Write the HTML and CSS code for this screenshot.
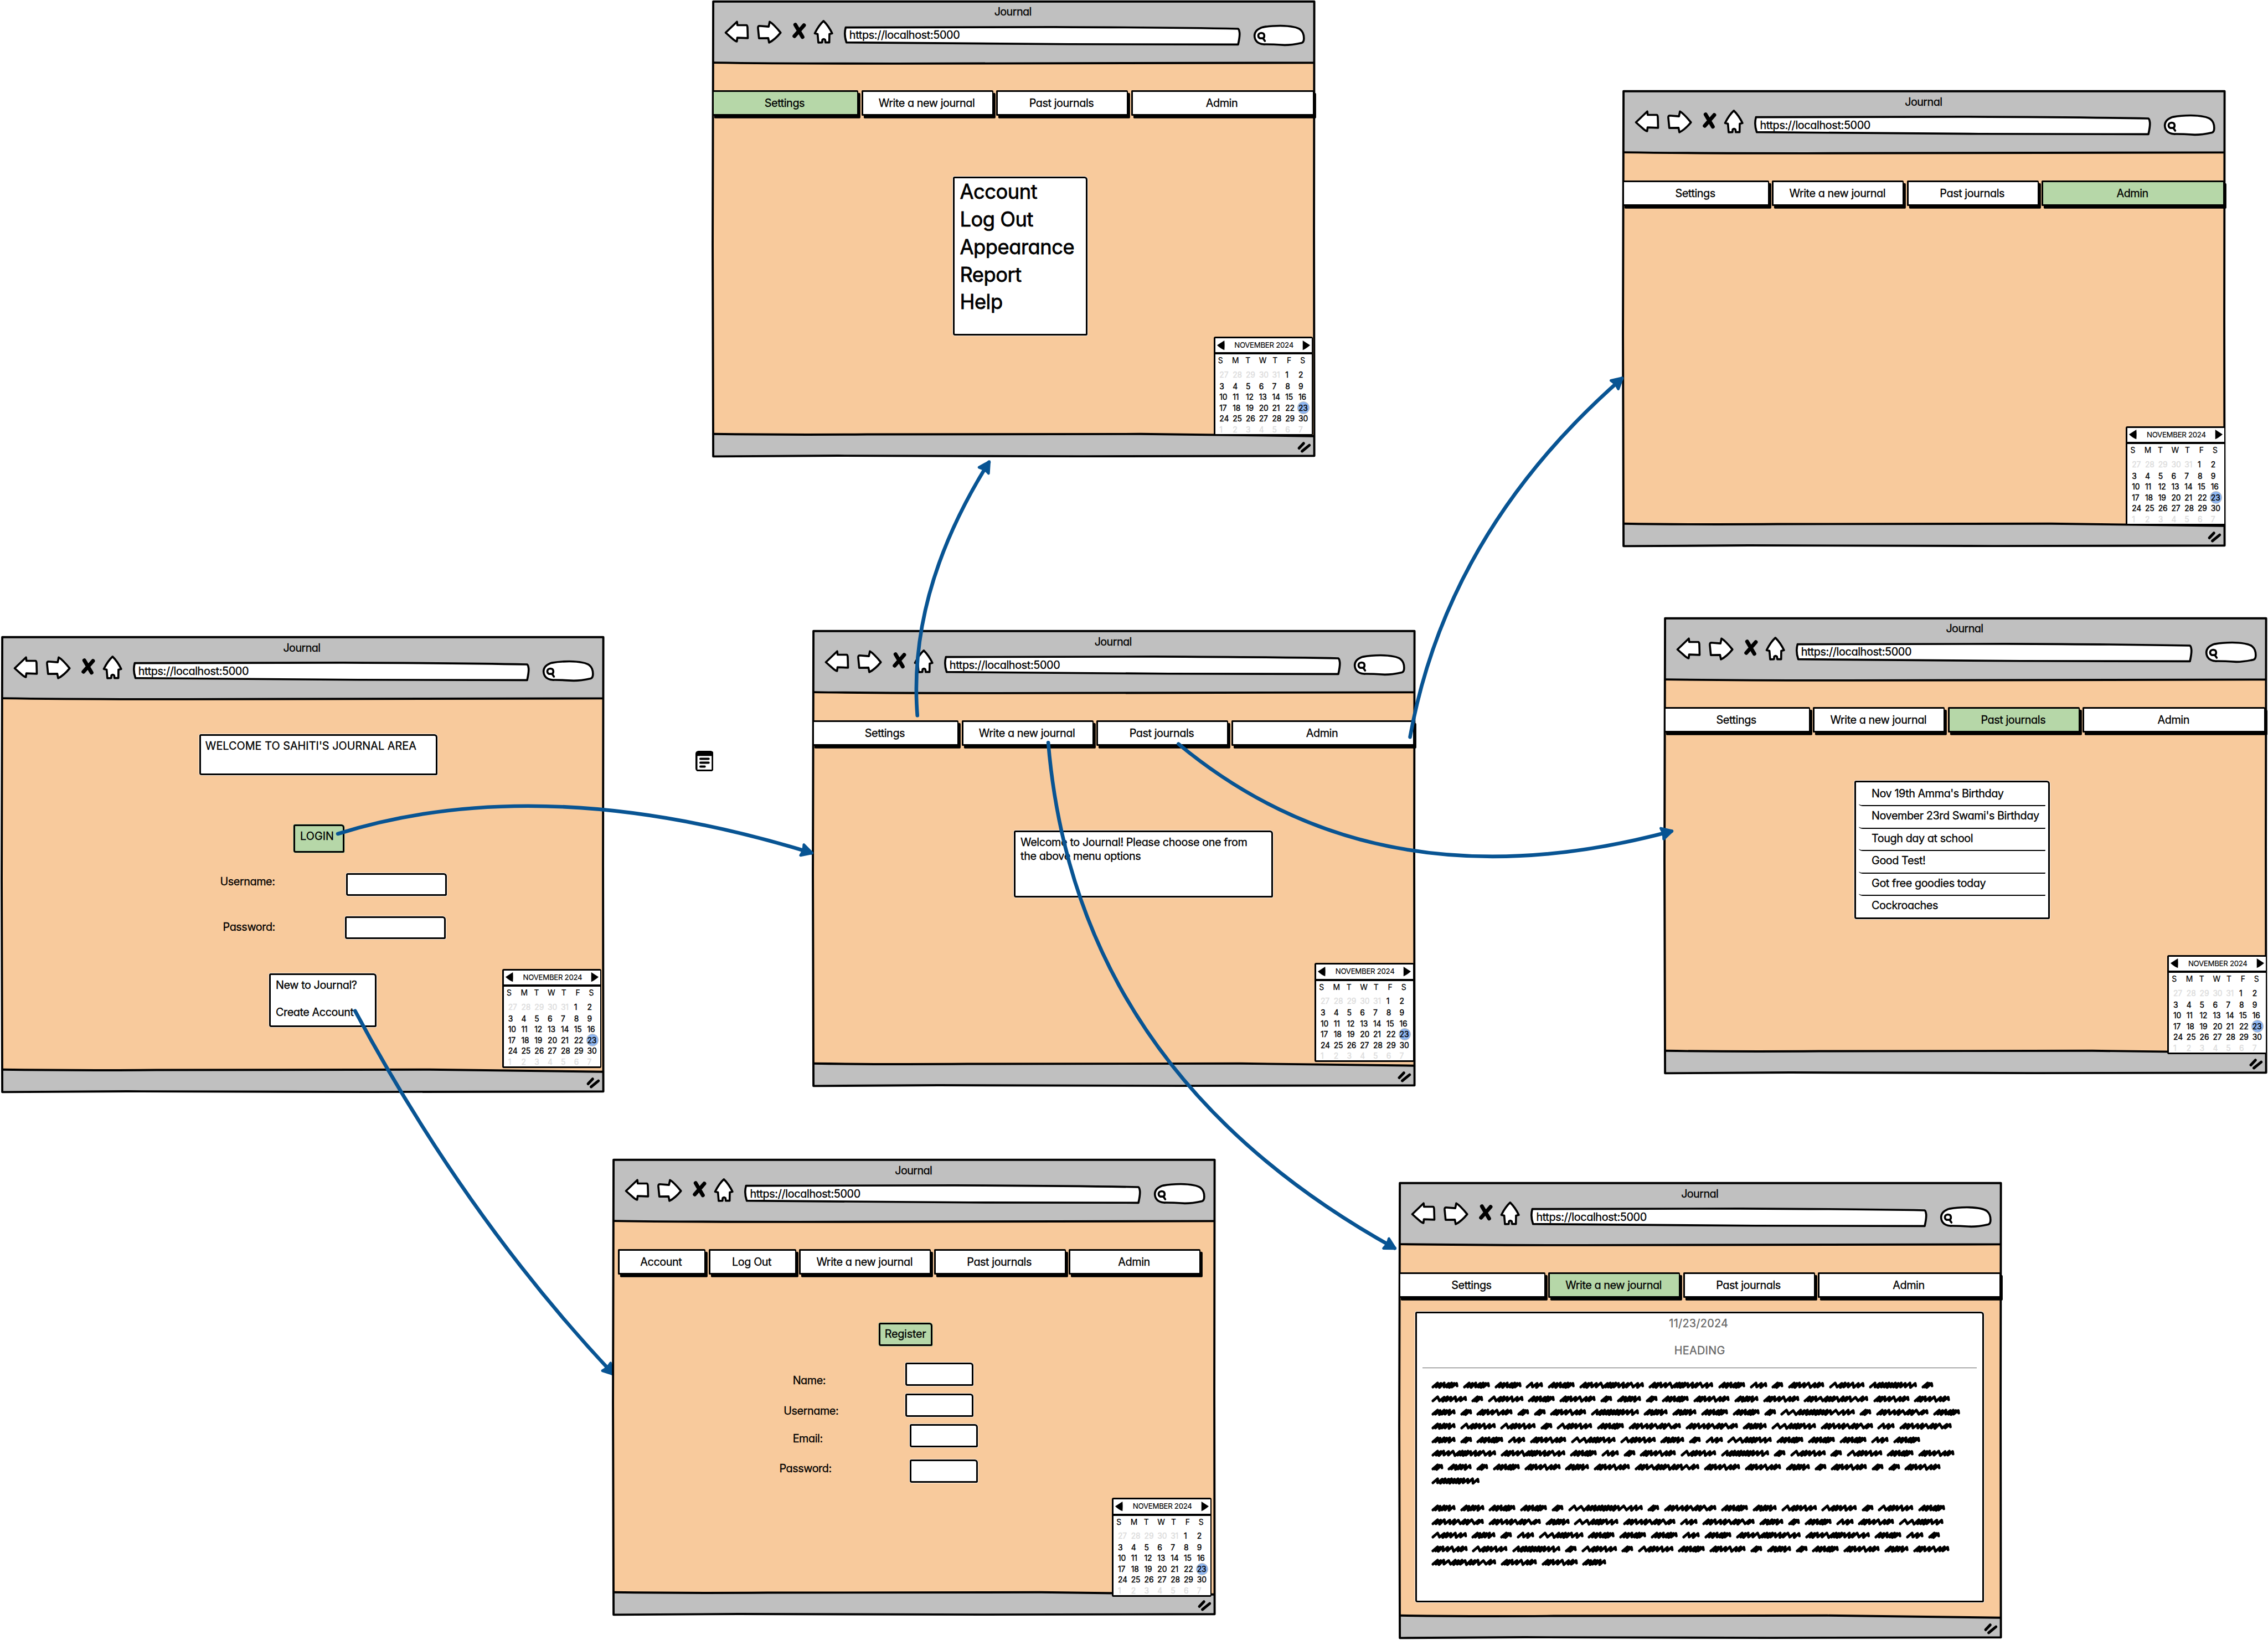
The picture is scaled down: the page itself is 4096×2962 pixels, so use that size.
FILE: index.html
```html
<!DOCTYPE html>
<html lang="en">
<head>
<meta charset="utf-8">
<title>Journal wireframes</title>
<link rel="stylesheet" href="styles.css">
</head>
<body>
<svg class="defs" aria-hidden="true">
  <symbol id="frame" viewBox="24 3 4191 3171" overflow="visible">
    <path fill="#f8ca9c" d="M30 10H4206V3168H30Z"/>
    <path fill="#c0c0c0" d="M30 10H4206V436L1500 441L30 434ZM30 3013H2800L4206 3027V3168H30Z"/>
    <g fill="none" stroke="#000" stroke-width="15" stroke-linejoin="round">
      <path d="M32 10H4206L4204 1600L4206 3165L2600 3168L900 3164L32 3169L28 1700Z"/>
      <path d="M32 434Q500 441 1300 441Q3000 439 4206 435M32 3013Q500 3020 1100 3016Q2400 3010 3000 3013L4206 3028"/>
    </g>
    <g fill="#fff" stroke="#000" stroke-width="14" stroke-linejoin="round" stroke-linecap="round">
      <path d="M118 226L197 150L200 174L262 174Q269 174 270 190L272 264L199 261L196 287Q185 286 160 263Z"/>
      <path d="M352 179L417 184L424 150Q450 165 500 226Q460 275 420 295L414 264L350 265L343 195Q342 180 352 179Z"/>
      <path d="M798 145Q832 178 858 231L839 236L838 294L812 294L809 275Q799 266 790 275L788 294L762 295L757 236L737 231Q765 175 798 145Z"/>
      <path d="M952 190L2400 187Q3200 190 3676 199Q3684 202 3687 225Q3690 250 3677 308L2500 306L957 294Q938 240 952 190Z"/>
      <path d="M3855 307Q3793 300 3791 248Q3792 205 3850 188Q3900 178 3970 178Q4080 180 4110 205Q4134 225 4134 265Q4134 292 4118 297Q4050 312 4000 312Q3900 306 3855 307Z"/>
      <path fill="none" d="M3828 265L3849 265Q3859 262 3859 246Q3857 228 3838 228Q3818 230 3817 247Q3818 261 3828 265M3850 265L3863 284"/>
    </g>
    <g fill="none" stroke="#000" stroke-linecap="round">
      <path stroke-width="27" d="M602 171L652 256M662 175L596 250"/>
      <path stroke-width="19" d="M4100 3112L4132 3078M4121 3133L4172 3091"/>
    </g>
  </symbol>
  <symbol id="prev" viewBox="0 0 18 23"><path d="M0 11L17 0Q18 11 17 22Q8 19 0 11Z"/></symbol>
  <symbol id="next" viewBox="0 0 18 23"><path d="M1 0L18 11Q9 19 1 22Z"/></symbol>
</svg>

<main class="board">
  <section class="window w-login">
    <svg class="frame"><use href="#frame"/></svg>
    <header class="bar"><h2>Journal</h2><p class="url">https://localhost:5000</p></header>
    <div class="box welcome caps">WELCOME TO SAHITI'S JOURNAL AREA</div>
    <div class="box button login caps">LOGIN</div>
    <div class="field l-user"><label>Username:</label><span class="box input"></span></div>
    <div class="field l-pass"><label>Password:</label><span class="box input"></span></div>
    <div class="box signup"><p>New to Journal?</p><p>Create Account</p></div>
    <div class="calendar"></div>
  </section>

  <section class="window w-settings">
    <svg class="frame"><use href="#frame"/></svg>
    <header class="bar"><h2>Journal</h2><p class="url">https://localhost:5000</p></header>
    <nav class="tabs"><a class="on">Settings</a><a>Write a new journal</a><a>Past journals</a><a>Admin</a></nav>
    <ul class="box menu"><li>Account</li><li>Log Out</li><li>Appearance</li><li>Report</li><li>Help</li></ul>
    <div class="calendar"></div>
  </section>

  <section class="window w-admin">
    <svg class="frame"><use href="#frame"/></svg>
    <header class="bar"><h2>Journal</h2><p class="url">https://localhost:5000</p></header>
    <nav class="tabs"><a>Settings</a><a>Write a new journal</a><a>Past journals</a><a class="on">Admin</a></nav>
    <div class="calendar"></div>
  </section>

  <section class="window w-home">
    <svg class="frame"><use href="#frame"/></svg>
    <header class="bar"><h2>Journal</h2><p class="url">https://localhost:5000</p></header>
    <nav class="tabs"><a>Settings</a><a>Write a new journal</a><a>Past journals</a><a>Admin</a></nav>
    <div class="box message">Welcome to Journal! Please choose one from<br>the above menu options</div>
    <div class="calendar"></div>
  </section>

  <section class="window w-past">
    <svg class="frame"><use href="#frame"/></svg>
    <header class="bar"><h2>Journal</h2><p class="url">https://localhost:5000</p></header>
    <nav class="tabs"><a>Settings</a><a>Write a new journal</a><a class="on">Past journals</a><a>Admin</a></nav>
    <ul class="box entries"><li>Nov 19th Amma's Birthday</li><li>November 23rd Swami's Birthday</li><li>Tough day at school</li><li>Good Test!</li><li>Got free goodies today</li><li>Cockroaches</li></ul>
    <div class="calendar"></div>
  </section>

  <section class="window w-write">
    <svg class="frame"><use href="#frame"/></svg>
    <header class="bar"><h2>Journal</h2><p class="url">https://localhost:5000</p></header>
    <nav class="tabs"><a>Settings</a><a class="on">Write a new journal</a><a>Past journals</a><a>Admin</a></nav>
    <article class="box paper">
      <p class="date">11/23/2024</p>
      <p class="heading">HEADING</p>
      <div class="scribble"></div>
    </article>
  </section>

  <svg class="note" viewBox="0 0 42 48"><rect width="42" height="48" rx="7"/><path fill="#fff" d="M4.500 12H37.500V43.500H4.500Z"/><path stroke="#000" stroke-width="5" stroke-linecap="round" d="M11.500 18.500H30.500M11.500 27.500H30.500M11.500 36.500H21.500"/></svg>

  <svg class="links" viewBox="0 0 5250 3796">
    <marker id="tip" markerUnits="userSpaceOnUse" markerWidth="50" markerHeight="50" viewBox="-25 -25 50 50" refX="6" refY="0" orient="auto"><path d="M8 0L-16 -13Q-12 0 -16 13Z" fill="#085493" stroke="#085493" stroke-width="6" stroke-linejoin="round"/></marker>
    <g fill="none" stroke="#085493" stroke-width="8.500" stroke-linecap="round">
      <path marker-end="url(#tip)" d="M782 1930Q1255 1782 1878 1974"/>
      <path marker-end="url(#tip)" d="M2123.500 1656Q2101 1370 2289 1070"/>
      <path marker-end="url(#tip)" d="M2426.500 1719Q2490 2480 3228 2889"/>
      <path marker-end="url(#tip)" d="M2728 1722Q3190 2106 3869 1924"/>
      <path marker-end="url(#tip)" d="M3264 1706Q3350 1230 3754 876"/>
      <path marker-end="url(#tip)" d="M822 2340Q1080 2820 1419 3180"/>
    </g>
  </svg>

  <section class="window w-register">
    <svg class="frame"><use href="#frame"/></svg>
    <header class="bar"><h2>Journal</h2><p class="url">https://localhost:5000</p></header>
    <nav class="tabs five"><a>Account</a><a>Log Out</a><a>Write a new journal</a><a>Past journals</a><a>Admin</a></nav>
    <div class="box button register">Register</div>
    <div class="field r-name"><label>Name:</label><span class="box input"></span></div>
    <div class="field r-user"><label>Username:</label><span class="box input"></span></div>
    <div class="field r-mail"><label>Email:</label><span class="box input"></span></div>
    <div class="field r-pass"><label>Password:</label><span class="box input"></span></div>
    <div class="calendar"></div>
  </section>
</main>
<script src="board.js"></script>
</body>
</html>
```
FILE: styles.css
```css
/* 1rem is ten board units; the board is 5250 units wide */
html { font-size: 7.802px; }
* { box-sizing: border-box; margin: 0; padding: 0; }
body {
  background: #fff;
  color: #000;
  font-family: Inter, "Noto Sans", sans-serif;
  font-feature-settings: "cv11", "calt" 0;
}
ul { list-style: none; }
.defs { position: absolute; width: 0; height: 0; }

.board {
  position: relative;
  width: 4096px;
  height: 2962px;
  overflow: hidden;
  font-size: 2.54rem;
  line-height: 3.2rem;
  letter-spacing: -.022em;
  -webkit-text-stroke: .04rem #000;
  white-space: nowrap;
}
.caps { letter-spacing: .002em; }

/* windows on the canvas */
.window { position: absolute; isolation: isolate; width: 139.7rem; height: 105.7rem; }
.w-login { left: .2rem; top: 147.3rem; --cal-x: 116.05rem; --cal-y: 76.95rem; }
.w-settings { left: 164.8rem; top: .1rem; --cal-x: 116.1rem; --cal-y: 77.8rem; }
.w-admin { left: 375.6rem; top: 20.95rem; --cal-x: 116.5rem; --cal-y: 77.7rem; }
.w-home { left: 188rem; top: 145.9rem; --cal-x: 116.3rem; --cal-y: 77rem; }
.w-past { left: 385.1rem; top: 142.9rem; --cal-x: 116.6rem; --cal-y: 78.15rem; }
.w-write { left: 323.8rem; top: 273.7rem; }
.w-register { left: 141.8rem; top: 268.3rem; --cal-x: 115.6rem; --cal-y: 78.4rem; }

.frame { position: absolute; left: 0; top: 0; width: 100%; height: 100%; overflow: visible; z-index: -1; }
.bar { height: 14.6rem; padding-top: .2rem; }
.bar h2 { font: inherit; line-height: 5.1rem; text-align: center; padding-right: .4rem; letter-spacing: -.03em; }
.url { padding-left: 31.8rem; line-height: 5.6rem; letter-spacing: -.018em; }

.tabs { display: grid; grid-template-columns: 33.9rem 30.5rem 30.5rem 42.3rem; gap: .7rem; margin-top: 6.2rem; }
.tabs.five { grid-template-columns: 20.3rem 20.3rem 30.5rem 30.5rem 30.5rem; margin-left: 1.2rem; }
.tabs a {
  height: 5.9rem;
  padding-right: .4rem;
  border: .45rem solid #000;
  border-right-width: .3rem;
  border-radius: .2rem .3rem .2rem .2rem;
  background: #fff;
  box-shadow: .5rem .6rem 0 #000;
  text-align: center;
  line-height: 5.35rem;
}
.tabs .on, .box.button { background: #b6d7a8; }

.box {
  border: .5rem solid #000;
  border-radius: .4rem .7rem .3rem .5rem;
  background: #fff;
  box-shadow: 0 0 0 .1rem #fff;
}
.box.button { box-shadow: 0 0 0 .1rem #b6d7a8; }
.paper, .entries, .message { border-width: .45rem; }

/* log in */
.welcome { margin: 8.1rem 0 0 45.9rem; width: 55.2rem; height: 9.5rem; padding: .75rem 0 0 1.05rem; }
.login { margin: 11.4rem 0 0 67.7rem; width: 11.8rem; height: 6.5rem; padding: .75rem 0 0 1.2rem; }
.field { display: flex; align-items: flex-start; height: 5.25rem; }
.l-user { margin: 4.7rem 0 0 50.75rem; }
.l-user label { width: 29.1rem; margin-top: .4rem; }
.l-pass { margin: 4.8rem 0 0 51.4rem; }
.l-pass label { width: 28.2rem; margin-top: .85rem; }
.field .input { width: 23.4rem; height: 5.25rem; }
.signup { margin: 8rem 0 0 62.1rem; width: 24.8rem; height: 12.4rem; padding: .65rem 0 0 1.15rem; }
.signup p + p { margin-top: 3.1rem; }

/* settings */
.menu { margin: 14.1rem 0 0 55.8rem; width: 31.1rem; height: 36.8rem; padding-left: 1.2rem; font-size: 4.65rem; line-height: 6.4rem; letter-spacing: -.013em; -webkit-text-stroke-width: .1rem; }
.menu li:first-child { margin-top: -.05rem; }

/* home */
.message { margin: 19.7rem 0 0 46.7rem; width: 60rem; height: 15.5rem; padding: .75rem 0 0 1.15rem; letter-spacing: -.02em; }

/* past journals */
.entries { margin: 11.1rem 0 0 44.15rem; width: 45.2rem; height: 32.1rem; padding: .35rem .6rem 0; letter-spacing: -.022em; }
.entries li { height: 5.2rem; line-height: 4.4rem; padding-left: 3rem; border-bottom: .35rem solid #000; border-radius: 0 0 .2rem .9rem / 0 0 .2rem .5rem; }
.entries li:last-child { border: 0; }

/* write */
.paper { margin: 3.25rem 0 0 3.8rem; width: 131.7rem; height: 67.3rem; padding: .75rem 1.3rem 0; }
.paper p { color: #666; -webkit-text-stroke-color: #666; text-align: center; letter-spacing: .015em; }
.paper .date { padding-right: .5rem; }
.paper .heading { margin-top: 3.1rem; height: 5.6rem; border-bottom: .2rem solid #5c5c5c; }
.scribble { padding: 2.4rem 0 0 2rem; }
.scribble div { display: flex; height: 3.16rem; gap: 1rem; align-items: center; }
.scribble svg { height: 1.7rem; overflow: visible; flex: none; }

/* register */
.register { margin: 11.25rem 0 0 61.55rem; width: 12.5rem; height: 5.4rem; padding-left: 1.05rem; line-height: 4.5rem; letter-spacing: -.012em; }
.w-register .field { height: 5.4rem; }
.w-register .input { width: 15.7rem; height: 5.4rem; }
.r-name { margin: 3.75rem 0 0 41.7rem; }
.r-name label { width: 26.1rem; margin-top: 2.6rem; }
.r-user { margin: 1.8rem 0 0 39.6rem; }
.r-user label { width: 28.2rem; margin-top: 2.4rem; }
.r-mail { margin: 1.7rem 0 0 41.7rem; }
.r-mail label { width: 27.1rem; margin-top: 1.75rem; }
.r-pass { margin: 2.8rem 0 0 38.6rem; }
.r-pass label { width: 30.2rem; margin-top: .5rem; }

/* calendar, pinned over the lower right corner */
.calendar {
  position: absolute;
  left: var(--cal-x);
  top: var(--cal-y);
  width: 23rem;
  height: 23rem;
  border: .5rem solid #000;
  border-right-width: .35rem;
  border-radius: .4rem;
  background: #fff;
  font-size: 1.78rem;
  letter-spacing: -.01em;
  -webkit-text-stroke-width: .05rem;
}
.cal-head { display: flex; align-items: center; justify-content: space-between; height: 3.8rem; padding: 0 .4rem; border-bottom: .55rem solid #000; font-size: 1.7rem; letter-spacing: -.022em; line-height: 2rem; -webkit-text-stroke-width: .02rem; }
.cal-head svg { width: 1.8rem; height: 2.3rem; }
.cal-head span { position: relative; left: .1rem; }
.cal-row { display: grid; grid-template-columns: repeat(7, 3.05rem); line-height: 2.5rem; padding-left: 1rem; }
.cal-days { grid-template-columns: 3.25rem 3.1rem 3.15rem 3.15rem 3.3rem 3.1rem 2rem; line-height: 3rem; padding: 0 0 .4rem .65rem; -webkit-text-stroke-width: .03rem; }
.cal-first { line-height: 2.8rem; }
.cal-row .dim { color: #ddd; -webkit-text-stroke-color: #ddd; }
.cal-row .today { position: relative; z-index: 0; }
.cal-row .today::before {
  content: "";
  position: absolute;
  z-index: -1;
  left: -.25rem;
  top: -.3rem;
  width: 2.6rem;
  height: 2.6rem;
  border: .2rem solid #bbb;
  border-radius: 50%;
  background: #8fb6f0;
}

.note { position: absolute; left: 160.95rem; top: 173.8rem; width: 4.2rem; height: 4.8rem; }
.links { position: absolute; left: 0; top: 0; width: 4096px; height: 2962px; }
```
FILE: board.js
```js
// Month grid for November 2024, shared by every window
const cells = [27, 28, 29, 30, 31];
for (let d = 1; d <= 30; d++) cells.push(d);
for (let d = 1; d <= 7; d++) cells.push(d);

let month = '<div class="cal-head"><svg><use href="#prev"/></svg><span>NOVEMBER 2024</span><svg><use href="#next"/></svg></div>';
month += '<div class="cal-row cal-days">' + [..."SMTWTFS"].map(d => `<span>${d}</span>`).join("") + "</div>";
for (let r = 0; r < 6; r++) {
  month += `<div class="cal-row${r ? "" : " cal-first"}">`;
  for (let c = 0; c < 7; c++) {
    const i = r * 7 + c;
    const cls = i < 5 || i > 34 ? "dim" : i === 27 ? "today" : "";
    month += `<span class="${cls}">${cells[i]}</span>`;
  }
  month += "</div>";
}
document.querySelectorAll(".calendar").forEach(el => { el.innerHTML = month; });

// Scribbled placeholder copy: each letter is a word of a given width and rhythm
const words = {
  a: [63, [8, 8, 11, 7, 6, 6]], b: [41, [12, 9]], c: [150.5, [6, 5, 9, 8, 12, 5, 5, 5, 5, 9, 8, 6, 12, 8]],
  d: [28, [5, 5]], e: [84.5, [5, 5, 9, 8, 12, 8, 6]], f: [83, [12, 6, 6, 8, 10, 8]],
  g: [112, [8, 5, 6, 5, 5, 6, 5, 5, 7, 8, 9]], h: [56.5, [5, 8, 5, 6, 8]],
  i: [122, [5, 6, 9, 8, 6, 11, 5, 6, 12, 5]], j: [104, [12, 11, 6, 5, 5, 5, 9, 8]],
  k: [173.5, [11, 12, 6, 5, 6, 5, 5, 5, 5, 6, 5, 9, 12, 8, 8]], l: [150.5, [5, 5, 8, 11, 5, 6, 5, 10, 6, 5, 9, 12, 6]]
};
const lines = [
  "aaabaccabdefgd", "fdfaedhdaehelee", "hdeddeghhaadkdia", "hffdfaiihjibi", "hdabejfhdbjaaaba",
  "ccabdefgdfdfae", "dhdaeheleehdedde", "g", "",
  "hhaadkdiahffdfa", "iihjibihdabej", "fhdbjaaabaccabd", "efgdfdfaedhdaehe", "leeh"
];

function scribble(kind) {
  const [w, steps] = words[kind];
  const slant = 12;
  const total = steps.reduce((s, v) => s + v, 0);
  const k = (w - 7 - slant) / total;
  const n = v => v.toFixed(1);
  let x = 3.5, path = `M${x} 13`;
  steps.forEach((s, i) => {
    const next = x + s * k, low = 13 + (i % 3 === 1 ? 1 : 0);
    path += `L${n(x + slant - 1)} ${3.5 + (i % 2)}L${n(next)} ${low}`;
    x = next;
  });
  path += `L${n(x + slant - 1)} 4.500L${n(w - 3.5)} 10.500`;
  return `<svg viewBox="0 0 ${w} 17" style="width:${w / 10}rem"><path d="${path}" fill="none" stroke="#000" stroke-width="6.200" stroke-linejoin="round" stroke-linecap="round"/></svg>`;
}
document.querySelector(".scribble").innerHTML = lines.map(l => `<div>${[...l].map(scribble).join("")}</div>`).join("");
```
